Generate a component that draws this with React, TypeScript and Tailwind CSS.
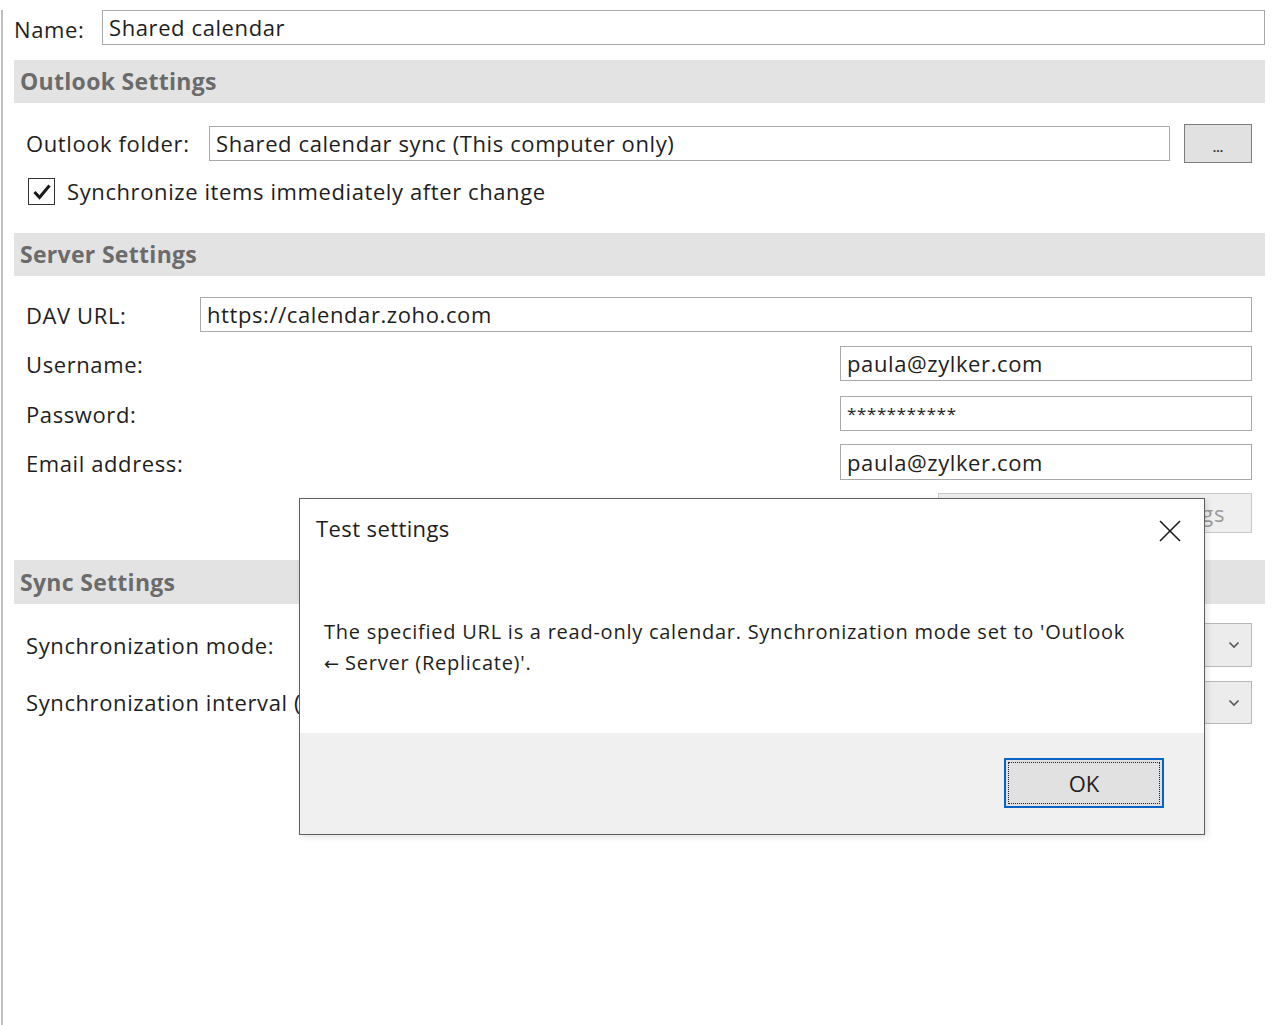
import React from "react";

const font = { fontFamily: '"Open Sans", "Noto Sans", sans-serif' };

function Header({ title, h = "h-[43px]" }: { title: string; h?: string }) {
  return (
    <div className={h + " bg-[#e3e3e3] flex items-center pl-[6px] text-[23px] font-bold text-[#6b6b6b] tracking-[0.3px]"}>
      {title}
    </div>
  );
}

function TextBox({ value, className = "", small = false }: { value: string; className?: string; small?: boolean }) {
  return (
    <div
      className={
        "h-[35px] border border-[#a9a9a9] bg-white flex items-center pl-[6px] text-[#1e1e1e] overflow-hidden whitespace-nowrap " +
        (small ? "text-[17px] tracking-[0.6px] " : "text-[22px] tracking-[0.6px] ") +
        className
      }
    >
      {value}
    </div>
  );
}

function Chevron() {
  return (
    <svg width="12" height="8" viewBox="0 0 12 8" className="text-[#555] shrink-0">
      <polyline points="1.5,1.5 6,6 10.5,1.5" fill="none" stroke="currentColor" strokeWidth="1.6" />
    </svg>
  );
}

const label = "text-[22px] tracking-[0.6px] whitespace-nowrap";

export default function App() {
  return (
    <div className="relative w-[1276px] h-[1025px] bg-white overflow-hidden text-[#1e1e1e]" style={font}>
      <div className="ml-[1px] mt-[10px] h-[1015px] border-l-2 border-[#c0c0c0] pl-[11px] pr-[11px]">
        {/* Name row */}
        <div className="flex items-center h-[35px]">
          <div className={"w-[88px] pt-[4px] " + label}>Name:</div>
          <TextBox value="Shared calendar" className="flex-1" />
        </div>

        <div className="mt-[15px]">
          <Header title="Outlook Settings" />
        </div>

        <div className="pl-[12px] pr-[13px]">
          <div className="mt-[21px] flex items-center h-[39px]">
            <div className={"w-[183px] " + label}>Outlook folder:</div>
            <TextBox value="Shared calendar sync (This computer only)" className="flex-1" />
            <div className="ml-[14px] w-[68px] h-[39px] bg-[#e1e1e1] border border-[#7d7d7d] flex items-end justify-center pb-[8px] text-[12px] leading-none font-bold text-[#333]">
              ...
            </div>
          </div>

          <div className="mt-[15px] flex items-center h-[27px]">
            <div className="ml-[2px] w-[27px] h-[27px] border border-[#333] bg-white flex items-center justify-center">
              <svg width="20" height="18" viewBox="0 0 20 18">
                <polyline points="2.5,9 7.5,14.5 17.5,2.5" fill="none" stroke="#1a1a1a" strokeWidth="3" />
              </svg>
            </div>
            <div className={"ml-[12px] " + label}>Synchronize items immediately after change</div>
          </div>
        </div>

        <div className="mt-[28px]">
          <Header title="Server Settings" />
        </div>

        <div className="pl-[12px] pr-[13px]">
          <div className="mt-[21px] flex items-center h-[35px]">
            <div className={"w-[174px] pt-[2px] " + label}>DAV URL:</div>
            <TextBox value="https://calendar.zoho.com" className="flex-1" />
          </div>
          <div className="mt-[14px] flex items-center justify-between h-[35px]">
            <div className={"pt-[2px] " + label}>Username:</div>
            <TextBox value="paula@zylker.com" className="w-[412px]" />
          </div>
          <div className="mt-[15px] flex items-center justify-between h-[35px]">
            <div className={"pt-[2px] " + label}>Password:</div>
            <TextBox value="***********" small className="w-[412px]" />
          </div>
          <div className="mt-[13px] flex items-center justify-between h-[36px]">
            <div className={"pt-[2px] " + label}>Email address:</div>
            <TextBox value="paula@zylker.com" className="w-[412px] h-[36px]" />
          </div>
          <div className="mt-[13px] flex justify-end">
            <div className="w-[314px] h-[40px] bg-[#efefef] border border-[#c8c8c8] flex items-center justify-end pr-[26px] text-[22px] tracking-[0.6px] text-[#9a9a9a]">
              Test settings
            </div>
          </div>
        </div>

        <div className="mt-[27px]">
          <Header title="Sync Settings" h="h-[44px]" />
        </div>

        <div className="pl-[12px] pr-[13px]">
          <div className="mt-[19px] flex items-center justify-between h-[44px]">
            <div className={label}>Synchronization mode:</div>
            <div className="w-[412px] h-[44px] bg-[#ececec] border border-[#b8b8b8] flex items-center justify-end pr-[11px] text-[22px] tracking-[0.6px] whitespace-nowrap">
              <span>Outlook ← Server (Replicate)</span>
              <span className="ml-[22px]"><Chevron /></span>
            </div>
          </div>
          <div className="mt-[14px] flex items-center justify-between h-[43px]">
            <div className={label}>Synchronization interval (minutes):</div>
            <div className="w-[412px] h-[43px] bg-[#ececec] border border-[#b8b8b8] flex items-center justify-between pl-[8px] pr-[11px] text-[22px] tracking-[0.6px]">
              <span>Only on startup</span>
              <Chevron />
            </div>
          </div>
        </div>
      </div>

      {/* Dialog */}
      <div className="absolute left-[299px] top-[498px] w-[906px] h-[337px] border border-[#5f5f5f] bg-white flex flex-col shadow-[2px_2px_6px_rgba(0,0,0,0.12)]">
        <div className="flex-1 flex flex-col">
          <div className="flex items-start justify-between pl-[16px] pr-[22px] pt-[13px]">
            <div className="text-[22px] tracking-[0.4px]">Test settings</div>
            <svg width="24" height="24" viewBox="0 0 24 24" className="mt-[7px]">
              <line x1="2" y1="2" x2="22" y2="22" stroke="#1a1a1a" strokeWidth="1.6" />
              <line x1="22" y1="2" x2="2" y2="22" stroke="#1a1a1a" strokeWidth="1.6" />
            </svg>
          </div>
          <div className="mt-[71px] pl-[24px] pr-[40px] text-[20px] tracking-[0.75px] leading-[31px] whitespace-nowrap">
            The specified URL is a read-only calendar. Synchronization mode set to 'Outlook
            <br />
            <span style={{ fontFamily: '"DejaVu Sans", sans-serif' }} className="text-[18px] tracking-normal">←</span> Server (Replicate)'.
          </div>
        </div>
        <div className="h-[101px] bg-[#f0f0f0] flex items-start justify-end pr-[40px] pt-[25px]">
          <div className="w-[160px] h-[50px] border-2 border-[#0a64c8] bg-[#e1e1e1] p-[2px]">
            <div className="w-full h-full border border-dotted border-[#222] flex items-center justify-center text-[22px]">
              OK
            </div>
          </div>
        </div>
      </div>
    </div>
  );
}
